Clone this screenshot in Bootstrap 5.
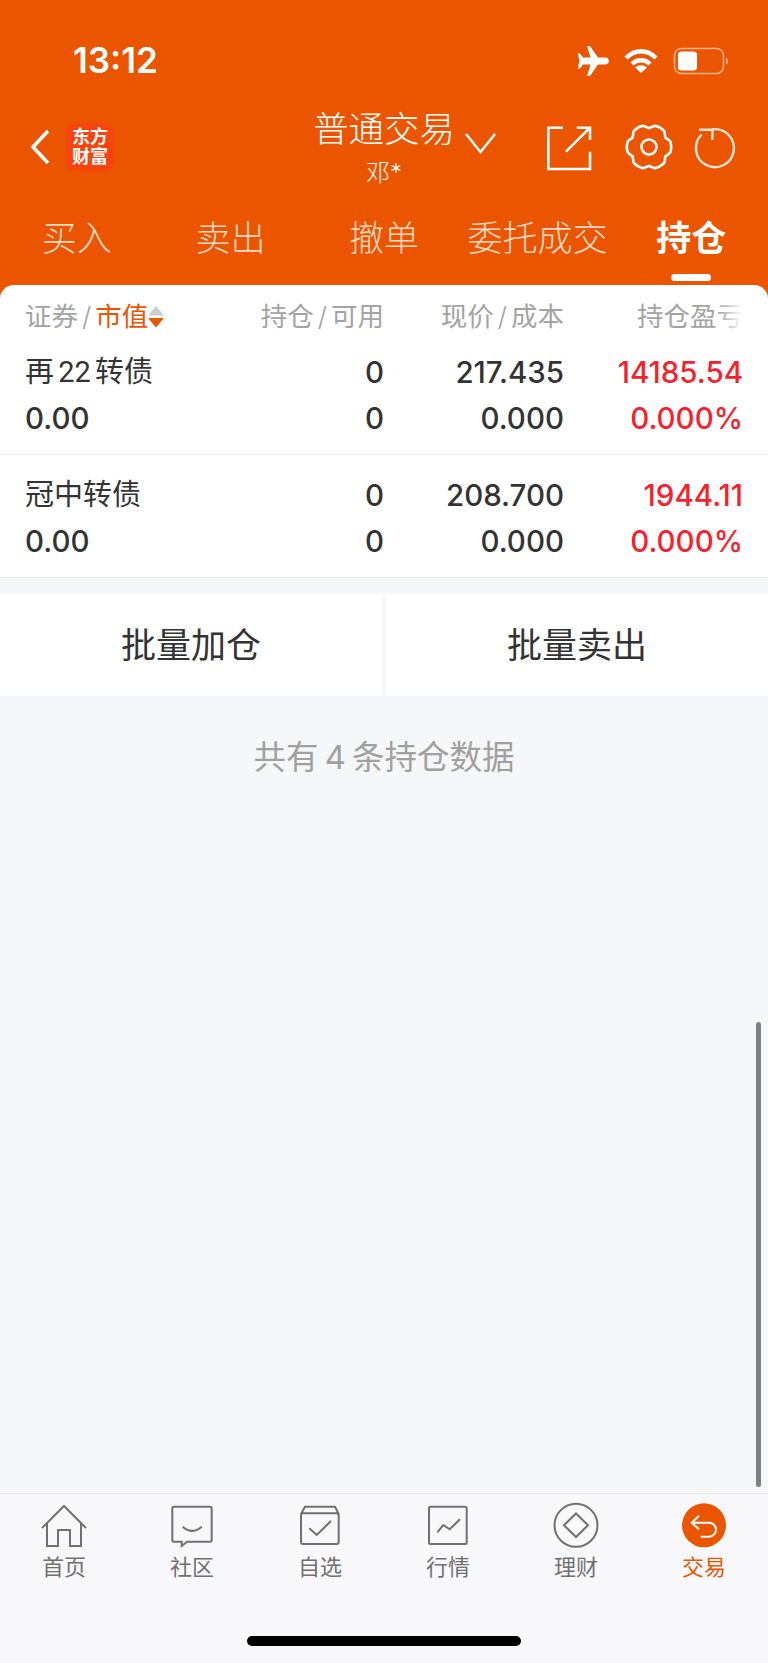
<!DOCTYPE html>
<html lang="zh-CN">
<head>
  <meta charset="UTF-8" />
  <meta name="viewport" content="width=device-width, initial-scale=1.0"/>
  <title>持仓</title>
  <link href="https://cdn.jsdelivr.net/npm/bootstrap@5.3.3/dist/css/bootstrap.min.css" rel="stylesheet">
  <style>
    html, body { height: 100%; }
    body { font-family: Inter, "Noto Sans CJK SC", sans-serif; background: #f6f7f9; color: #333; overflow: hidden; }
    .app-frame { height: 1663px; }

    .top-area { background: #eb5500; height: 285px; color: #fff; }
    .status-row { height: 120px; padding: 41px 39px 0 73px; }
    .clock { font-size: 35px; font-weight: 600; line-height: 38px; }
    .status-icons { gap: 15px; height: 38px; margin-top: 1px; }
    .title-row { height: 84px; }
    .back-btn { margin-left: 30px; margin-top: 9px; width: 20px; }
    .logo-box { width: 48px; height: 48px; margin-left: 16px; margin-top: 3px; border-radius: 9px; background: #f8440f; font-size: 18px; line-height: 20px; font-weight: 700; }
    .title-box { margin-left: 199px; margin-top: -10px; width: 142px; text-align: center; }
    .title-main { font-size: 35.500px; line-height: 40px; white-space: nowrap; font-weight: 300; }
    .title-sub { font-size: 24px; line-height: 26px; font-weight: 300; margin-top: 10px; }
    .title-caret { margin-left: 10px; margin-top: 11px; }
    .head-icons { margin-top: 3px; margin-left: 49px; }
    .share-icon { margin-top: 1px; }
    .gear-icon { margin-left: 32px; }
    .reload-icon { margin-left: 19px; }
    .tab-strip { height: 81px; }
    .tab-item { font-size: 35px; line-height: 44px; color: #fbd9c4; font-weight: 300; padding-top: 12px; }
    .tab-item.on { color: #fff; font-weight: 700; }
    .tab-item.on::after { content: ""; position: absolute; left: 50%; margin-left: -20px; top: 70px; width: 40px; height: 7px; border-radius: 4px; background: #fff; }

    .hold-wrap { background: linear-gradient(#eb5500 14px, transparent 14px); }
    .hold-card { background: #fff; border-radius: 14px 14px 0 0; }
    .hold-grid { display: grid; grid-template-columns: 1fr 130px 180px 179px; padding: 0 25px; align-content: start; }
    .hold-head { height: 64px; align-content: center; align-items: center; font-size: 26.500px; color: #a3a3a3; }
    .slash-sep { margin: 0 4px; font-weight: 300; }
    .hold-row { border-bottom: 1px solid #eeeeee; font-size: 29.500px; font-weight: 500; line-height: 46px; }
    .hold-row.r1 { height: 106px; }
    .hold-row.r2 { padding-top: 17px; height: 123px; }
    .stock-name { font-family: Roboto, "Noto Sans CJK SC", sans-serif; font-weight: 400; font-size: 29px; word-spacing: -3px; }
    .up-red { color: #f5222d; }
    .sort-on { color: #eb5500; }
    .fade-end { position: relative; }
    .fade-end::after { content: ""; position: absolute; right: 0; top: 2px; bottom: 2px; width: 26px; background: linear-gradient(to right, rgba(255,255,255,0), #fff); }

    .batch-row { margin-top: 16px; gap: 4px; }
    .batch-btn { background: #fff; height: 102px; font-size: 35px; color: #333; border: 0; border-radius: 0; padding: 0; }
    .batch-note { font-size: 32.500px; color: #a0a0a0; margin-top: 40px; line-height: 44px; word-spacing: -3px; }

    .scroll-thumb { position: absolute; left: 756px; top: 1022px; width: 5px; height: 465px; border-radius: 3px; background: #7d7f82; }

    .bottom-nav { border-top: 1px solid #e3e4e6; height: 170px; background: #f8f8fb; }
    .nav-cell { font-size: 22px; line-height: 28px; color: #707070; padding-top: 8px; }
    .nav-cell svg { display: block; margin-bottom: 3px; }
    .nav-cell.on { color: #eb5500; }
    .home-bar { position: absolute; left: 247px; top: 1636px; width: 274px; height: 10px; border-radius: 5px; background: #000; }
  </style>
</head>
<body>
  <div class="app-frame d-flex flex-column position-relative">

    <div class="top-area flex-shrink-0">
      <div class="status-row d-flex justify-content-between">
        <div class="clock">13:12</div>
        <div class="status-icons d-flex align-items-center">
          <svg width="32" height="30" viewBox="0 0 32 30"><path fill="#fff" d="M10 0h3l8 11.500h7c2.400 0 4 1.600 4 3.500s-1.600 3.500-4 3.500h-7L13 30h-3l3.500-11.500H6L3 22.500H.8L2.400 15 .8 7.500H3L6 11.500h7.500z"/></svg>
          <svg width="34" height="26" viewBox="0 0 34 26"><g fill="none" stroke="#fff" stroke-width="4.400"><path d="M2 10c9-9 21-9 30 0"/><path d="M8 16c5-5 13-5 18 0"/></g><path fill="#fff" d="M17 25l-6-5.500c3.500-3 8.500-3 12 0z"/></svg>
          <svg width="56" height="28" viewBox="0 0 56 28"><rect x="1.500" y="1.500" width="49" height="25" rx="7" fill="none" stroke="#fff" stroke-opacity=".55" stroke-width="1.600"/><rect x="5" y="4.500" width="19" height="19" rx="3.500" fill="#fff"/><path d="M53 10.500c2.500 1 2.500 6 0 7z" fill="#fff" fill-opacity=".55"/></svg>
        </div>
      </div>

      <div class="title-row d-flex align-items-start">
        <svg class="back-btn" height="36" viewBox="0 0 20 36"><path d="M18 2L3 18l15 16" fill="none" stroke="#fff" stroke-width="3.600"/></svg>
        <div class="logo-box d-flex flex-column justify-content-center text-center flex-shrink-0">
          <div>东方</div>
          <div>财富</div>
        </div>
        <div class="title-box">
          <div class="title-main">普通交易</div>
          <div class="title-sub">邓*</div>
        </div>
        <svg class="title-caret" width="31" height="24" viewBox="0 0 31 24"><path d="M1 3l14.500 18L30 3" fill="none" stroke="#fff" stroke-width="2.400"/></svg>
        <div class="head-icons d-flex align-items-start">
          <svg class="share-icon" width="48" height="48" viewBox="0 0 48 48"><path d="M18 3.700H3.300V45H45V27.700M21 27.700L45 3.700M31.700 3.700H45V16" fill="none" stroke="#fff" stroke-width="2.600"/></svg>
          <svg class="gear-icon" width="48" height="48" viewBox="0 0 48 48">
            <g fill="none" stroke="#fff" stroke-width="2.600" stroke-linecap="round">
              <path id="gear-lobe" d="M40.450 14.500C41.450 16.200 43.500 16.200 45.350 18.680Q47 24 45.350 29.320C43.500 31.800 41.450 31.800 40.450 33.500"/>
              <use href="#gear-lobe" transform="rotate(60 24 24)"/>
              <use href="#gear-lobe" transform="rotate(120 24 24)"/>
              <use href="#gear-lobe" transform="rotate(180 24 24)"/>
              <use href="#gear-lobe" transform="rotate(240 24 24)"/>
              <use href="#gear-lobe" transform="rotate(300 24 24)"/>
              <circle cx="24" cy="24" r="7.500"/>
            </g>
          </svg>
          <svg class="reload-icon" width="48" height="48" viewBox="0 0 48 48"><path d="M20.400 6.300A19 19 0 1 1 9.700 11.500M7 6.700H20.400V17" fill="none" stroke="#fff" stroke-opacity=".85" stroke-width="2.400"/></svg>
        </div>
      </div>

      <div class="tab-strip row g-0 row-cols-5 text-center">
        <div class="col tab-item position-relative">买入</div>
        <div class="col tab-item position-relative">卖出</div>
        <div class="col tab-item position-relative">撤单</div>
        <div class="col tab-item position-relative">委托成交</div>
        <div class="col tab-item position-relative on">持仓</div>
      </div>
    </div>

    <div class="hold-wrap flex-shrink-0">
      <div class="hold-card">
        <div class="hold-grid hold-head">
          <div class="d-flex align-items-center">证券<span class="slash-sep">/</span><span class="sort-on">市值</span>
            <svg width="16" height="22" viewBox="0 0 16 22"><path d="M8 0l8 9.500H0z" fill="#ccc"/><path d="M0 12h16l-8 9.500z" fill="#eb5500"/></svg>
          </div>
          <div class="text-end text-nowrap">持仓<span class="slash-sep">/</span>可用</div>
          <div class="text-end text-nowrap">现价<span class="slash-sep">/</span>成本</div>
          <div class="text-end text-nowrap fade-end">持仓盈亏</div>
        </div>
        <div class="hold-grid hold-row r1">
          <div class="stock-name">再 22 转债</div>
          <div class="text-end">0</div>
          <div class="text-end">217.435</div>
          <div class="text-end up-red">14185.54</div>
          <div>0.00</div>
          <div class="text-end">0</div>
          <div class="text-end">0.000</div>
          <div class="text-end up-red">0.000%</div>
        </div>
        <div class="hold-grid hold-row r2">
          <div class="stock-name">冠中转债</div>
          <div class="text-end">0</div>
          <div class="text-end">208.700</div>
          <div class="text-end up-red">1944.11</div>
          <div>0.00</div>
          <div class="text-end">0</div>
          <div class="text-end">0.000</div>
          <div class="text-end up-red">0.000%</div>
        </div>
      </div>
    </div>

    <div class="batch-row d-flex flex-shrink-0">
      <button type="button" class="btn batch-btn flex-fill w-50">批量加仓</button>
      <button type="button" class="btn batch-btn flex-fill w-50">批量卖出</button>
    </div>
    <div class="batch-note text-center">共有 4 条持仓数据</div>

    <div class="flex-grow-1"></div>

    <div class="bottom-nav d-flex flex-shrink-0">
      <div class="nav-cell flex-fill w-100 d-flex flex-column align-items-center">
        <svg width="48" height="48" viewBox="0 0 48 48"><path d="M2 26L24 4l22 22M7 21v23h11V28h12v16h11V21" fill="none" stroke="#707070" stroke-width="2"/></svg>
        首页
      </div>
      <div class="nav-cell flex-fill w-100 d-flex flex-column align-items-center">
        <svg width="48" height="48" viewBox="0 0 48 48"><path d="M6 4.700h36a1.700 1.700 0 0 1 1.700 1.700V38a1.700 1.700 0 0 1-1.700 1.700H19L13.700 44V39.700H6A1.700 1.700 0 0 1 4.300 38V6.400A1.700 1.700 0 0 1 6 4.700zM14.700 24.700Q24 33 33.700 24.700" fill="none" stroke="#707070" stroke-width="2"/></svg>
        社区
      </div>
      <div class="nav-cell flex-fill w-100 d-flex flex-column align-items-center">
        <svg width="48" height="48" viewBox="0 0 48 48"><path d="M5 12L9 4.700h30L42.700 12M7 11.300h33.700a2 2 0 0 1 2 2V40a2 2 0 0 1-2 2H7a2 2 0 0 1-2-2V13.300a2 2 0 0 1 2-2zM13.300 26.300L20.700 33 35 19" fill="none" stroke="#707070" stroke-width="2"/></svg>
        自选
      </div>
      <div class="nav-cell flex-fill w-100 d-flex flex-column align-items-center">
        <svg width="48" height="48" viewBox="0 0 48 48"><rect x="5" y="4.700" width="37.700" height="37.300" rx="1.500" fill="none" stroke="#707070" stroke-width="2"/><path d="M13.300 30.300L19.300 23l6.400 4.300L36 17.300" fill="none" stroke="#707070" stroke-width="2"/></svg>
        行情
      </div>
      <div class="nav-cell flex-fill w-100 d-flex flex-column align-items-center">
        <svg width="48" height="48" viewBox="0 0 48 48"><circle cx="24" cy="23.300" r="21.500" fill="none" stroke="#707070" stroke-width="2"/><path d="M24 11.500L36 23.300 24 35 12 23.300z" fill="none" stroke="#707070" stroke-width="2"/></svg>
        理财
      </div>
      <div class="nav-cell flex-fill w-100 d-flex flex-column align-items-center on">
        <svg width="48" height="48" viewBox="0 0 48 48"><circle cx="24" cy="23.300" r="22" fill="#eb5500"/><path d="M19 13.700L11.700 20.700 19 27.300M11.700 20.700H29A7 7 0 0 1 29 34.700H20.700" fill="none" stroke="#fff" stroke-width="2"/></svg>
        交易
      </div>
    </div>

    <div class="scroll-thumb"></div>
    <div class="home-bar"></div>
  </div>
  <script src="https://cdn.jsdelivr.net/npm/bootstrap@5.3.3/dist/js/bootstrap.bundle.min.js"></script>
</body>
</html>
